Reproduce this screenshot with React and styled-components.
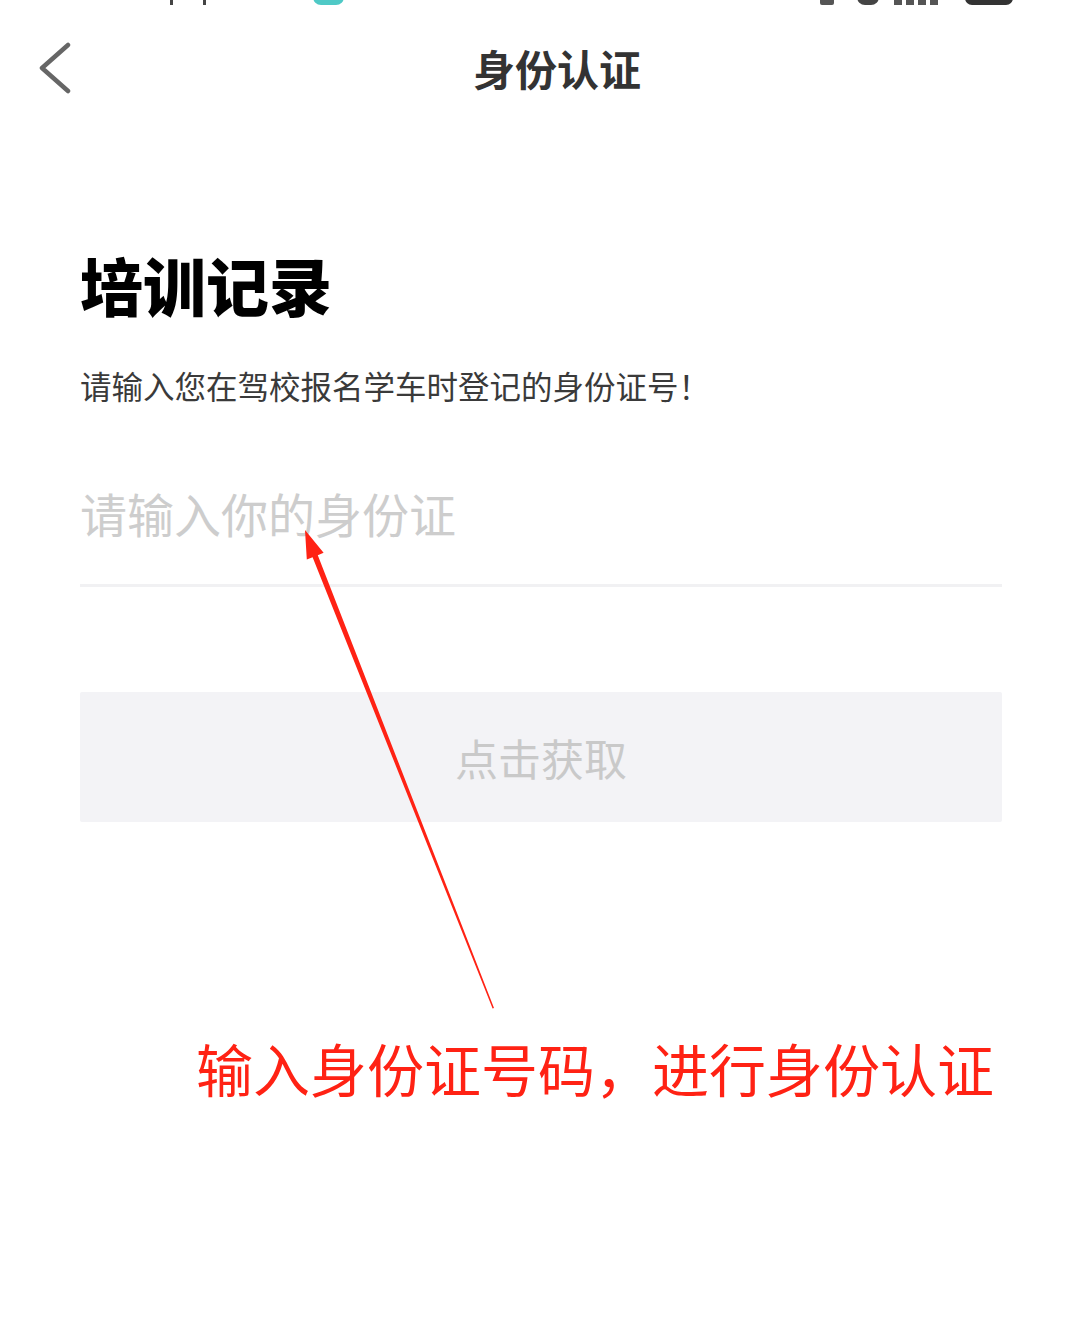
import React from 'react'
import styled, { createGlobalStyle } from 'styled-components'

const GlobalStyle = createGlobalStyle`
  html, body {
    margin: 0;
    padding: 0;
    background: #fff;
  }
  body {
    font-family: "Noto Sans CJK SC", "Noto Sans", sans-serif;
  }
`

const Page = styled.div`
  position: relative;
  width: 1080px;
  height: 1320px;
  background: #fff;
  overflow: hidden;
`

// only the bottom edge of the phone status bar is left in the shot
const StatusStrip = styled.div`
  display: flex;
  align-items: flex-end;
  height: 5px;
  overflow: hidden;
`

const StatusPiece = styled.span`
  flex: none;
  display: block;
  margin-left: ${p => p.offset}px;
  width: ${p => p.w}px;
  height: 16px;
  background: ${p => p.color || '#444'};
  border-radius: ${p => p.radius || 0}px;
`

const NavBar = styled.div`
  display: grid;
  grid-template-columns: 120px 1fr 120px;
  align-items: center;
  height: 129px;
`

const BackButton = styled.button`
  display: flex;
  align-items: center;
  justify-content: flex-start;
  padding: 0 0 4px 38px;
  border: 0;
  background: none;
  height: 60px;
  cursor: pointer;
`

const NavTitle = styled.h1`
  margin: 0;
  padding: 0 0 4px 34px;
  text-align: center;
  font-size: 42px;
  font-weight: 700;
  color: #333;
`

const Content = styled.div`
  padding: 0 78px 0 80px;
`

const Heading = styled.h2`
  margin: 118px 0 0;
  font-size: 63px;
  line-height: 63px;
  font-weight: 900;
  color: #000;
`

const Hint = styled.p`
  margin: 54px 0 0;
  font-size: 31.5px;
  line-height: 32px;
  color: #3a3a3a;
`

const IdInput = styled.input`
  display: block;
  width: 100%;
  box-sizing: border-box;
  margin-top: 86px;
  padding: 0 0 45px;
  border: 0;
  border-bottom: 3px solid #f1f1f3;
  outline: none;
  background: transparent;
  font-family: inherit;
  font-size: 47px;
  line-height: 52px;
  color: #333;

  &::placeholder {
    color: #cdcdcd;
  }
`

const FetchButton = styled.button`
  display: block;
  width: 922px;
  height: 130px;
  margin-top: 105px;
  border: 0;
  border-radius: 2px;
  background: #f3f3f6;
  color: #c9c9c9;
  font-family: inherit;
  font-size: 43px;
  cursor: pointer;
`

const Annotation = styled.p`
  margin: 215px 0 0;
  padding-left: 196px;
  font-size: 57px;
  line-height: 60px;
  color: #ff2214;
  white-space: nowrap;
`

const ArrowLayer = styled.svg`
  position: absolute;
  left: 0;
  top: 0;
  pointer-events: none;
`

const ChevronLeft = () => (
  <svg width='34' height='52' viewBox='0 0 34 52' fill='none'>
    <polyline points='30,3 4,26 30,49' stroke='#666' strokeWidth='4.5' strokeLinecap='round' strokeLinejoin='round' />
  </svg>
)

export default function App () {
  return (
    <Page>
      <GlobalStyle />
      <StatusStrip>
        <StatusPiece offset={170} w={3} />
        <StatusPiece offset={30} w={3} />
        <StatusPiece offset={107} w={31} color='#4fc9c6' radius={8} />
        <StatusPiece offset={476} w={14} color='#555' radius={2} />
        <StatusPiece offset={23} w={22} color='#444' radius={11} />
        <StatusPiece offset={15} w={8} color='#555' />
        <StatusPiece offset={4} w={8} color='#555' />
        <StatusPiece offset={4} w={8} color='#555' />
        <StatusPiece offset={4} w={8} color='#555' />
        <StatusPiece offset={27} w={48} color='#333' radius={7} />
      </StatusStrip>
      <NavBar>
        <BackButton aria-label='返回'>
          <ChevronLeft />
        </BackButton>
        <NavTitle>身份认证</NavTitle>
        <span />
      </NavBar>
      <Content>
        <Heading>培训记录</Heading>
        <Hint>请输入您在驾校报名学车时登记的身份证号！</Hint>
        <IdInput placeholder='请输入你的身份证' />
        <FetchButton>点击获取</FetchButton>
      </Content>
      <Annotation>输入身份证号码，进行身份认证</Annotation>
      <ArrowLayer width='1080' height='1320' viewBox='0 0 1080 1320'>
        <polygon
          points='305,530 323.6,552.8 317.8,555.2 494,1008 492.6,1008.4 312.6,557.2 306.8,559.4'
          fill='#ff2214'
        />
      </ArrowLayer>
    </Page>
  )
}
